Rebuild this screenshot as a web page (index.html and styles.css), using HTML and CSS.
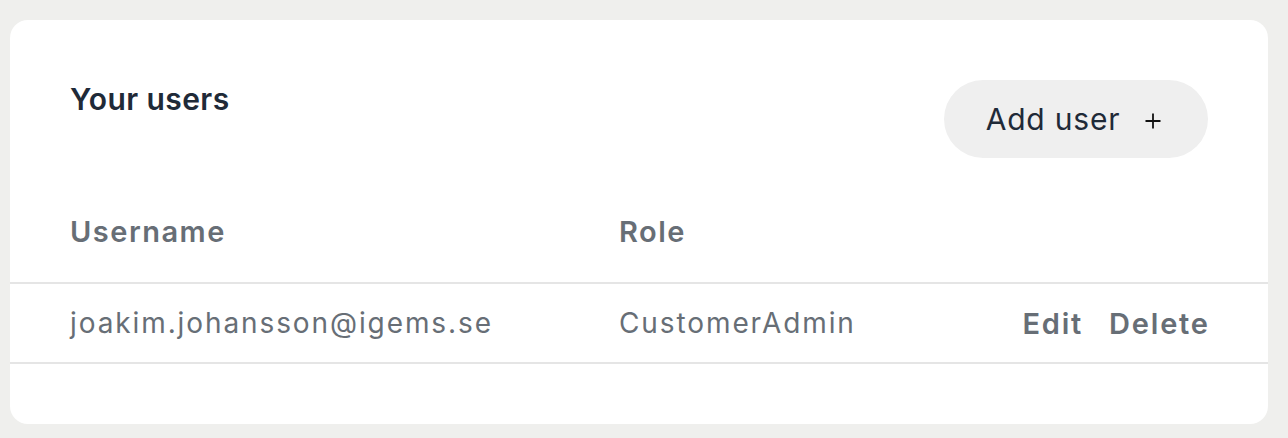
FILE: index.html
```html
<!DOCTYPE html>
<html lang="en">
<head>
<meta charset="utf-8">
<title>Your users</title>
<link rel="stylesheet" href="styles.css">
</head>
<body>
<main class="page">
  <section class="card">
    <header class="card-head">
      <h2 class="title">Your users</h2>
      <button class="add-btn" type="button">Add user <svg class="plus" width="18" height="18" viewBox="0 0 18 18" aria-hidden="true"><path d="M9 1.5v15M1.5 9h15" stroke="#111" stroke-width="1.8" fill="none"/></svg></button>
    </header>
    <table class="users">
      <thead>
        <tr>
          <th class="col-user">Username</th>
          <th class="col-role">Role</th>
          <th class="col-actions"></th>
        </tr>
      </thead>
      <tbody>
        <tr>
          <td class="col-user">joakim.johansson@igems.se</td>
          <td class="col-role">CustomerAdmin</td>
          <td class="col-actions"><a class="action">Edit</a><a class="action">Delete</a></td>
        </tr>
      </tbody>
    </table>
  </section>
</main>
</body>
</html>
```

FILE: styles.css
```css
* { box-sizing: border-box; }
html, body { margin: 0; padding: 0; }
body {
  background: #efefed;
  font-family: Inter, "Noto Sans", sans-serif;
  width: 1288px;
  height: 438px;
  overflow: hidden;
}
.page { padding: 20px 20px 14px 10px; }
.card {
  background: #ffffff;
  border-radius: 18px;
  height: 404px;
  padding-top: 60px;
}
.card-head {
  display: flex;
  justify-content: space-between;
  align-items: flex-start;
  padding: 0 60px;
  height: 134px;
}
.title {
  margin: 0;
  font-size: 30px;
  font-weight: 600;
  color: #1f2a38;
  line-height: 38px;
  letter-spacing: 0.4px;
}
.add-btn {
  height: 78px;
  width: 264px;
  border: none;
  border-radius: 39px;
  background: #efefef;
  font-family: inherit;
  font-size: 30px;
  letter-spacing: 0.8px;
  color: #1f2a38;
  display: flex;
  align-items: center;
  justify-content: center;
  gap: 24px;
  padding: 0 4px 0 0;
}
.plus { display: block; margin-top: 4px; }
.users {
  width: 100%;
  border-collapse: collapse;
}
.users th, .users td {
  text-align: left;
  padding: 0;
}
.users th {
  font-size: 29px;
  font-weight: 600;
  color: #676e76;
  height: 69px;
  vertical-align: top;
  border-bottom: 2px solid #e5e5e5;
  letter-spacing: 1.5px;
}
.users td {
  font-size: 28px;
  color: #676e76;
  height: 80px;
  border-bottom: 2px solid #e5e5e5;
  letter-spacing: 1.9px;
}
.col-user { padding-left: 60px !important; width: 609px; }
.col-role { width: 300px; }
.col-actions { text-align: right !important; padding-right: 60px !important; }
.action { font-weight: 600; font-size: 29px; margin-left: 26px; letter-spacing: 1.8px; }
.action:last-child { margin-right: -1.8px; }
```
